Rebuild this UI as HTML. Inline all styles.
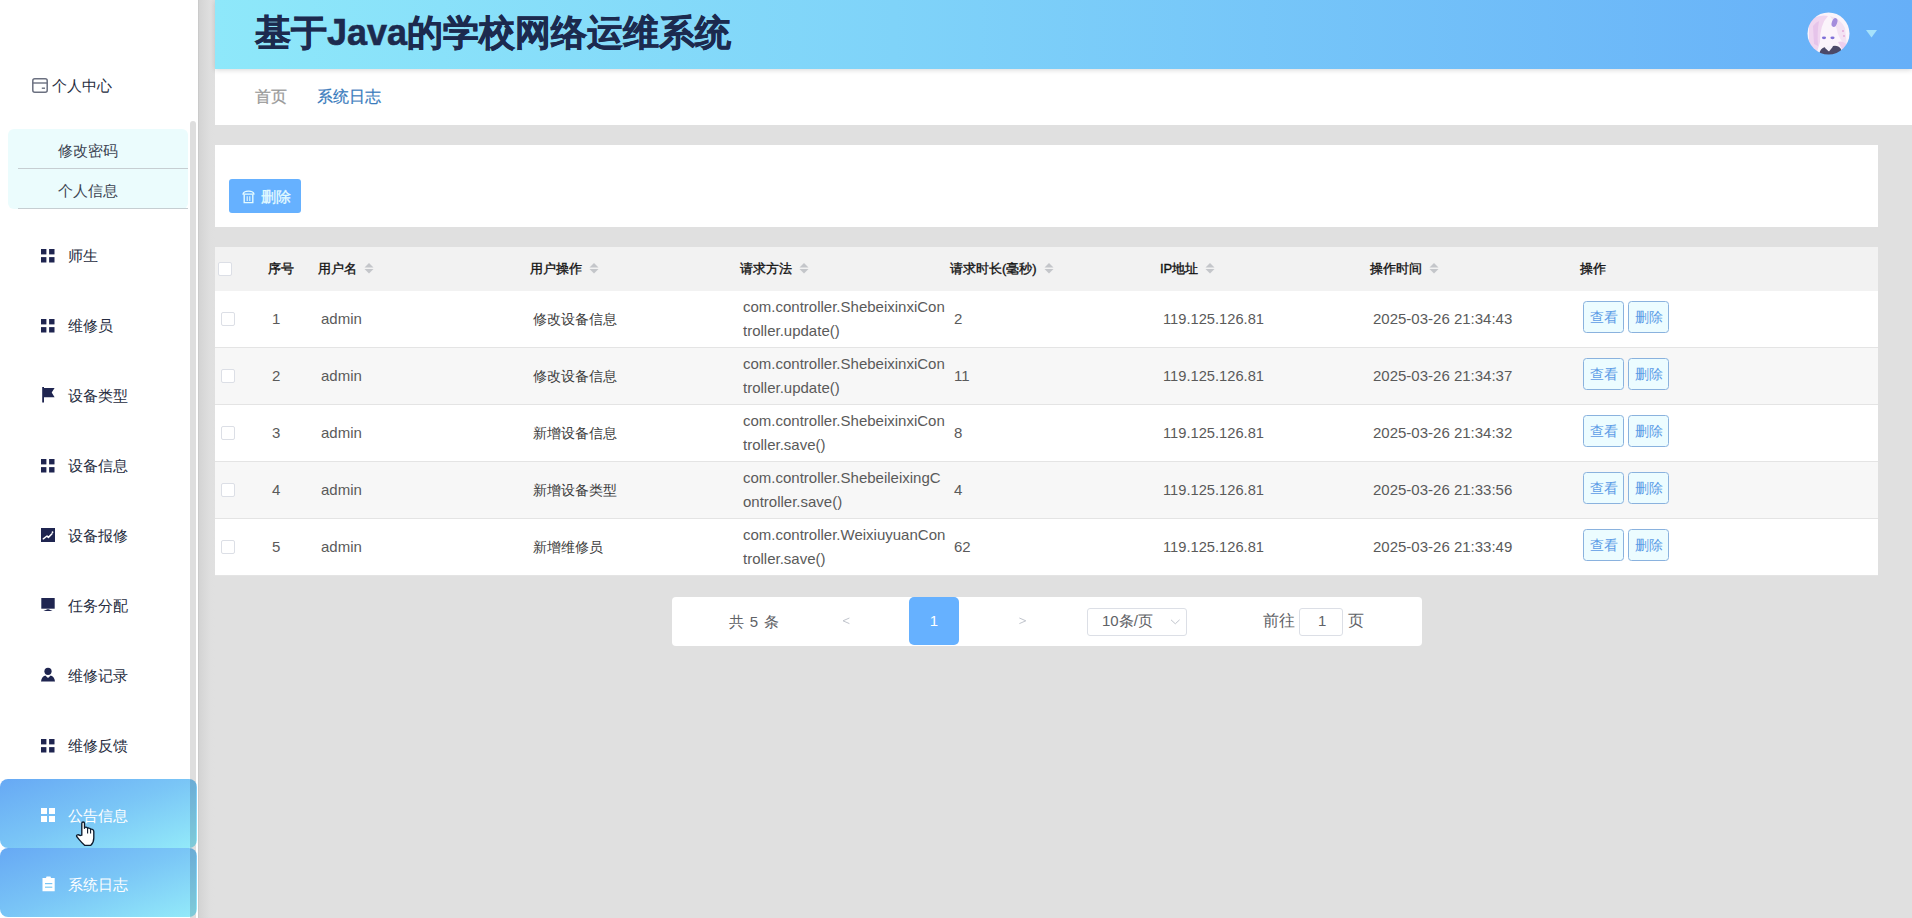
<!DOCTYPE html>
<html><head><meta charset="utf-8"><style>
*{margin:0;padding:0;box-sizing:border-box}
html,body{width:1912px;height:918px;overflow:hidden}
body{background:#e0e0e0;font-family:"Liberation Sans",sans-serif;position:relative;color:#333}
.a{position:absolute;white-space:nowrap}
#side{position:absolute;left:0;top:0;width:198px;height:918px;background:#fff}
#shadow{position:absolute;left:198px;top:0;width:17px;height:918px;background:linear-gradient(to right,#c6c6c6 0,#d4d4d4 1.5px,#d9d9d9 6px,#dfdfdf 12px,#e0e0e0 17px)}
#thumb{position:absolute;left:190px;top:121px;width:6px;height:797px;background:rgba(0,0,0,.13);border-radius:3px 3px 0 0;z-index:1}
.mi{font-size:15px;color:#262c40;line-height:20px;left:68px}
.mi.w{color:#fff}
#sub{position:absolute;left:8px;top:129px;width:180px;height:80px;background:#ebfcfd;border-radius:6px}
.si{position:absolute;left:10px;width:170px;height:40px;border-bottom:1px solid #c6ced2;font-size:15px;line-height:43px;color:#3c4452;padding-left:40px}
.act{position:absolute;left:0;width:197px;height:69px;border-radius:8px;background:linear-gradient(160deg,#62a6f4 0%,#76c4f6 50%,#90eaf9 100%);opacity:.97}
#header{position:absolute;left:215px;top:0;width:1697px;height:69px;background:linear-gradient(90deg,#8ee8fa 0%,#7fd3f9 40%,#66aff8 100%);box-shadow:0 1px 5px rgba(0,0,0,.16);z-index:2}
#title{left:40px;top:8px;font-size:36px;line-height:50px;font-weight:bold;color:#1c2a4e;-webkit-text-stroke:0.6px #1c2a4e}
#crumb{position:absolute;left:215px;top:69px;width:1697px;height:56px;background:#fff}
#card{position:absolute;left:215px;top:145px;width:1663px;height:82px;background:#fff}
#delbtn{position:absolute;left:14px;top:34px;width:72px;height:34px;background:#66b1ff;border-radius:3px}
#table{position:absolute;left:215px;top:247px;width:1663px;height:329px;background:#fff}
.th{position:absolute;left:0;top:0;height:44px;width:1663px;background:#f2f2f2}
.hd{top:12px;font-size:13px;line-height:20px;color:#111;-webkit-text-stroke:0.35px #111}
.row{position:absolute;left:0;width:1663px;height:57px;border-bottom:1px solid #e4e4e4}
.cb{position:absolute;width:14px;height:14px;background:#fff;border:1px solid #dcdfe6;border-radius:2px}
.td{top:18px;font-size:15px;line-height:20px;color:#5a5a5a}
.td2{top:4px;font-size:15px;line-height:24px;color:#5a5a5a}
.ob{position:absolute;top:10px;width:41px;height:32px;border:1px solid #8ab2de;border-radius:3.5px;background:#ecfcff;color:#5b9be6;font-size:14px;line-height:30px;text-align:center}
#pag{position:absolute;left:672px;top:597px;width:750px;height:49px;background:#fff;border-radius:4px}
.pt{top:14px;font-size:15px;line-height:20px;color:#606266}
#pg1{position:absolute;left:237px;top:0;width:50px;height:48px;background:#66b1ff;border-radius:5px;color:#fff;font-size:15px;line-height:48px;text-align:center}
#sel{position:absolute;left:415px;top:11px;width:100px;height:28px;border:1px solid #dcdfe6;border-radius:3px}
#inp{position:absolute;left:627px;top:11px;width:44px;height:28px;border:1px solid #dcdfe6;border-radius:3px}

.cj{font-size:14px;color:#3c3c3c}

</style></head><body>
<div id="side"></div><div id="thumb"></div><div id="shadow"></div>
<svg class="a" style="left:32px;top:78px" width="16" height="15" viewBox="0 0 16 15"><rect x="0.8" y="0.8" width="14.4" height="13.4" rx="2" fill="none" stroke="#6b7080" stroke-width="1.5"/><line x1="0.8" y1="5" x2="15.2" y2="5" stroke="#6b7080" stroke-width="1.4"/><line x1="9.8" y1="10.2" x2="13" y2="10.2" stroke="#6b7080" stroke-width="1.4"/></svg>
<div class="a mi" style="left:52px;top:76px">个人中心</div>
<div id="sub"><div class="si" style="top:0">修改密码</div><div class="si" style="top:40px">个人信息</div></div>
<div class="act" style="top:779px"></div>
<div class="act" style="top:848px"></div>
<svg class="a" style="left:41.3px;top:248.5px" width="15" height="15" viewBox="0 0 15 15"><rect x="0" y="0" width="5.4" height="5.4" fill="#1f2550"/><rect x="8.1" y="0" width="5.4" height="5.4" fill="#1f2550"/><rect x="0" y="8.1" width="5.4" height="5.4" fill="#1f2550"/><rect x="8.1" y="8.1" width="5.4" height="5.4" fill="#1f2550"/></svg>
<div class="a mi" style="top:246px">师生</div>
<svg class="a" style="left:41.3px;top:318.5px" width="15" height="15" viewBox="0 0 15 15"><rect x="0" y="0" width="5.4" height="5.4" fill="#1f2550"/><rect x="8.1" y="0" width="5.4" height="5.4" fill="#1f2550"/><rect x="0" y="8.1" width="5.4" height="5.4" fill="#1f2550"/><rect x="8.1" y="8.1" width="5.4" height="5.4" fill="#1f2550"/></svg>
<div class="a mi" style="top:316px">维修员</div>
<svg class="a" style="left:41px;top:387px" width="15" height="16" viewBox="0 0 15 16"><rect x="1.2" y="0" width="1.8" height="15.5" fill="#1f2550"/><path d="M3 1 L13.6 1 L10.7 5.6 L13.6 10.3 L3 10.3 Z" fill="#1f2550"/></svg>
<div class="a mi" style="top:386px">设备类型</div>
<svg class="a" style="left:41.3px;top:458.5px" width="15" height="15" viewBox="0 0 15 15"><rect x="0" y="0" width="5.4" height="5.4" fill="#1f2550"/><rect x="8.1" y="0" width="5.4" height="5.4" fill="#1f2550"/><rect x="0" y="8.1" width="5.4" height="5.4" fill="#1f2550"/><rect x="8.1" y="8.1" width="5.4" height="5.4" fill="#1f2550"/></svg>
<div class="a mi" style="top:456px">设备信息</div>
<svg class="a" style="left:41px;top:528px" width="14" height="14" viewBox="0 0 14 14"><rect x="0" y="0" width="14" height="14" fill="#1f2550"/><path d="M2.3 10.8 L6 8 L7.4 9.4 L11 5.8" stroke="#fff" stroke-width="1.5" fill="none" stroke-linecap="round" stroke-linejoin="round"/><circle cx="11.5" cy="4.2" r="0.9" fill="#fff"/></svg>
<div class="a mi" style="top:526px">设备报修</div>
<svg class="a" style="left:41px;top:598px" width="14" height="14" viewBox="0 0 14 14"><rect x="0.3" y="0" width="13.4" height="10.7" fill="#1f2550"/><path d="M2.4 12.6 Q5.5 12 6.2 11.2 L7.8 11.2 Q8.5 12 11.6 12.6 Q7 13.6 2.4 12.6 Z" fill="#1f2550"/></svg>
<div class="a mi" style="top:596px">任务分配</div>
<svg class="a" style="left:41px;top:667px" width="14" height="15" viewBox="0 0 14 15"><circle cx="7" cy="4.3" r="3.6" fill="#1f2550"/><path d="M0 14.5 Q0.6 9.5 4.3 8.6 L7 11 L9.7 8.6 Q13.4 9.5 14 14.5 Z" fill="#1f2550"/></svg>
<div class="a mi" style="top:666px">维修记录</div>
<svg class="a" style="left:41.3px;top:738.5px" width="15" height="15" viewBox="0 0 15 15"><rect x="0" y="0" width="5.4" height="5.4" fill="#1f2550"/><rect x="8.1" y="0" width="5.4" height="5.4" fill="#1f2550"/><rect x="0" y="8.1" width="5.4" height="5.4" fill="#1f2550"/><rect x="8.1" y="8.1" width="5.4" height="5.4" fill="#1f2550"/></svg>
<div class="a mi" style="top:736px">维修反馈</div>
<svg class="a" style="left:41px;top:807.5px" width="15" height="15" viewBox="0 0 15 15"><rect x="0" y="0" width="6" height="6" fill="#fff"/><rect x="8" y="0" width="6" height="6" fill="#fff"/><rect x="0" y="8" width="6" height="6" fill="#fff"/><rect x="8" y="8" width="6" height="6" fill="#fff"/></svg>
<div class="a mi w" style="top:806px">公告信息</div>
<svg class="a" style="left:42px;top:876px" width="14" height="16" viewBox="0 0 14 16"><path d="M0.5 2 L4 2 L4.5 0.6 L8.5 0.6 L9 2 L12.7 2 L12.7 15.2 L0.5 15.2 Z" fill="#fff"/><rect x="3" y="7" width="7.3" height="1.2" fill="#79c5f5"/><rect x="3" y="10.6" width="7.3" height="1.2" fill="#7ccaf5"/></svg>
<div class="a mi w" style="top:875px">系统日志</div>
<svg class="a" style="left:75px;top:821px" width="21" height="27" viewBox="0 0 21 27"><path d="M6.8 14.2 L6.8 2.5 Q6.8 1 8.15 1 Q9.5 1 9.5 2.5 L9.5 7.2 Q9.7 6 11 6.1 Q12.4 6.2 12.6 7.4 Q13 6.9 14.1 7.1 Q15.4 7.3 15.6 8.4 Q16.2 8 17.3 8.3 Q18.8 8.8 18.8 10.6 L18.8 17 Q18.8 21.6 15.8 24.3 L9.6 24.3 Q7.2 22.2 4.2 18.6 L1.9 15.8 Q1.1 14.6 2.1 14 Q3.5 13.3 5 14.6 Z" fill="#fff" stroke="#0f1c2e" stroke-width="1.35" stroke-linejoin="round"/><path d="M12.6 7.6 L12.6 12.6 M15.6 8.6 L15.6 12.6" stroke="#0f1c2e" stroke-width="1.1"/></svg>
<div id="header"><div class="a" id="title">基于Java的学校网络运维系统</div>
<svg class="a" style="left:1592px;top:12px" width="43" height="43" viewBox="0 0 43 43"><defs><clipPath id="cc"><circle cx="21.5" cy="21.5" r="21"/></clipPath><filter id="bl" x="-5%" y="-5%" width="110%" height="110%"><feGaussianBlur stdDeviation="0.5"/></filter></defs><g clip-path="url(#cc)"><g filter="url(#bl)"><rect width="43" height="43" fill="#fbf4fb"/><path d="M2 10 Q10 2 21 4 Q13 12 13 30 L10 40 L2 36Z" fill="#f0d6f0"/><path d="M6 14 Q9 10 12 9 Q10 20 11 34 L7 32Z" fill="#e6c4ea"/><path d="M23 4 Q33 6 38 16 L40 34 Q34 30 31 22 Q29 12 23 4Z" fill="#f3e2f3"/><ellipse cx="27.5" cy="10.5" rx="2.6" ry="4.6" transform="rotate(20 27.5 10.5)" fill="#a48ddc"/><ellipse cx="17" cy="25.8" rx="2.1" ry="1.4" fill="#7f70d8"/><ellipse cx="25.5" cy="25.8" rx="2.1" ry="1.4" fill="#7f70d8"/><path d="M12 43 Q13 36 18 35 L21.5 39 L26 34 Q31 33 34 37 L35 43Z" fill="#4c4868"/><path d="M17.5 35.5 Q21.5 33 26 34.5 L22 39.5Z" fill="#f6f2fa"/><circle cx="36" cy="19" r="1" fill="#e4a8d8"/><circle cx="37" cy="24" r="0.9" fill="#e4a8d8"/><path d="M31 30 Q36 28 40 33 L38 41 Q34 36 31 30Z" fill="#edcfee"/></g></g></svg>
<svg class="a" style="left:1651px;top:30px" width="11" height="8" viewBox="0 0 11 8"><path d="M0 0 L11 0 L5.5 7.5 Z" fill="#a6e2fb"/></svg>
</div>
<div id="crumb"><div class="a" style="left:40px;top:18px;font-size:16px;line-height:20px;color:#999;-webkit-text-stroke:0.25px #999">首页</div><div class="a" style="left:102px;top:18px;font-size:16px;line-height:20px;color:#3a7cbd;-webkit-text-stroke:0.2px #3a7cbd">系统日志</div></div>
<div id="card"><div id="delbtn"><svg class="a" style="left:13px;top:11px" width="13" height="14" viewBox="0 0 13 14"><path d="M1 4.2 Q1.5 1.2 6.5 1.2 Q11.5 1.2 12 4.2 Z" fill="none" stroke="#e4fbff" stroke-width="1.3" stroke-linejoin="round"/><path d="M2.2 4.4 L2.2 12.6 L10.8 12.6 L10.8 4.4" fill="none" stroke="#e4fbff" stroke-width="1.4"/><line x1="5.2" y1="6.2" x2="5.2" y2="11" stroke="#e4fbff" stroke-width="1.1"/><line x1="7.8" y1="6.2" x2="7.8" y2="11" stroke="#e4fbff" stroke-width="1.1"/></svg><div class="a" style="left:32px;top:8px;font-size:15px;line-height:20px;color:#e6fdff;-webkit-text-stroke:0.3px #e6fdff">删除</div></div></div>
<div id="table"><div class="th"></div>
<div class="cb" style="left:3px;top:15px"></div>
<div class="a hd" style="left:53px">序号</div>
<div class="a hd" style="left:103px">用户名</div>
<svg class="a" style="left:149px;top:16px" width="10" height="11" viewBox="0 0 10 11"><path d="M5 0 L9.5 4.5 L0.5 4.5 Z" fill="#c4c6ca"/><path d="M0.5 6 L9.5 6 L5 10.5 Z" fill="#c4c6ca"/></svg>
<div class="a hd" style="left:315px">用户操作</div>
<svg class="a" style="left:374px;top:16px" width="10" height="11" viewBox="0 0 10 11"><path d="M5 0 L9.5 4.5 L0.5 4.5 Z" fill="#c4c6ca"/><path d="M0.5 6 L9.5 6 L5 10.5 Z" fill="#c4c6ca"/></svg>
<div class="a hd" style="left:525px">请求方法</div>
<svg class="a" style="left:584px;top:16px" width="10" height="11" viewBox="0 0 10 11"><path d="M5 0 L9.5 4.5 L0.5 4.5 Z" fill="#c4c6ca"/><path d="M0.5 6 L9.5 6 L5 10.5 Z" fill="#c4c6ca"/></svg>
<div class="a hd" style="left:735px">请求时长(毫秒)</div>
<svg class="a" style="left:829px;top:16px" width="10" height="11" viewBox="0 0 10 11"><path d="M5 0 L9.5 4.5 L0.5 4.5 Z" fill="#c4c6ca"/><path d="M0.5 6 L9.5 6 L5 10.5 Z" fill="#c4c6ca"/></svg>
<div class="a hd" style="left:945px">IP地址</div>
<svg class="a" style="left:990px;top:16px" width="10" height="11" viewBox="0 0 10 11"><path d="M5 0 L9.5 4.5 L0.5 4.5 Z" fill="#c4c6ca"/><path d="M0.5 6 L9.5 6 L5 10.5 Z" fill="#c4c6ca"/></svg>
<div class="a hd" style="left:1155px">操作时间</div>
<svg class="a" style="left:1214px;top:16px" width="10" height="11" viewBox="0 0 10 11"><path d="M5 0 L9.5 4.5 L0.5 4.5 Z" fill="#c4c6ca"/><path d="M0.5 6 L9.5 6 L5 10.5 Z" fill="#c4c6ca"/></svg>
<div class="a hd" style="left:1365px">操作</div>
<div class="row" style="top:44px;background:#fff">
<div class="cb" style="left:6px;top:21px"></div>
<div class="a td" style="left:57px">1</div>
<div class="a td" style="left:106px">admin</div>
<div class="a td cj" style="left:318px">修改设备信息</div>
<div class="a td2" style="left:528px">com.controller.ShebeixinxiCon<br>troller.update()</div>
<div class="a td" style="left:739px">2</div>
<div class="a td" style="left:948px;font-size:14.7px">119.125.126.81</div>
<div class="a td" style="left:1158px">2025-03-26 21:34:43</div>
<div class="ob" style="left:1368px">查看</div><div class="ob" style="left:1413px">删除</div>
</div>
<div class="row" style="top:101px;background:#f7f7f7">
<div class="cb" style="left:6px;top:21px"></div>
<div class="a td" style="left:57px">2</div>
<div class="a td" style="left:106px">admin</div>
<div class="a td cj" style="left:318px">修改设备信息</div>
<div class="a td2" style="left:528px">com.controller.ShebeixinxiCon<br>troller.update()</div>
<div class="a td" style="left:739px">11</div>
<div class="a td" style="left:948px;font-size:14.7px">119.125.126.81</div>
<div class="a td" style="left:1158px">2025-03-26 21:34:37</div>
<div class="ob" style="left:1368px">查看</div><div class="ob" style="left:1413px">删除</div>
</div>
<div class="row" style="top:158px;background:#fff">
<div class="cb" style="left:6px;top:21px"></div>
<div class="a td" style="left:57px">3</div>
<div class="a td" style="left:106px">admin</div>
<div class="a td cj" style="left:318px">新增设备信息</div>
<div class="a td2" style="left:528px">com.controller.ShebeixinxiCon<br>troller.save()</div>
<div class="a td" style="left:739px">8</div>
<div class="a td" style="left:948px;font-size:14.7px">119.125.126.81</div>
<div class="a td" style="left:1158px">2025-03-26 21:34:32</div>
<div class="ob" style="left:1368px">查看</div><div class="ob" style="left:1413px">删除</div>
</div>
<div class="row" style="top:215px;background:#f7f7f7">
<div class="cb" style="left:6px;top:21px"></div>
<div class="a td" style="left:57px">4</div>
<div class="a td" style="left:106px">admin</div>
<div class="a td cj" style="left:318px">新增设备类型</div>
<div class="a td2" style="left:528px">com.controller.ShebeileixingC<br>ontroller.save()</div>
<div class="a td" style="left:739px">4</div>
<div class="a td" style="left:948px;font-size:14.7px">119.125.126.81</div>
<div class="a td" style="left:1158px">2025-03-26 21:33:56</div>
<div class="ob" style="left:1368px">查看</div><div class="ob" style="left:1413px">删除</div>
</div>
<div class="row" style="top:272px;background:#fff">
<div class="cb" style="left:6px;top:21px"></div>
<div class="a td" style="left:57px">5</div>
<div class="a td" style="left:106px">admin</div>
<div class="a td cj" style="left:318px">新增维修员</div>
<div class="a td2" style="left:528px">com.controller.WeixiuyuanCon<br>troller.save()</div>
<div class="a td" style="left:739px">62</div>
<div class="a td" style="left:948px;font-size:14.7px">119.125.126.81</div>
<div class="a td" style="left:1158px">2025-03-26 21:33:49</div>
<div class="ob" style="left:1368px">查看</div><div class="ob" style="left:1413px">删除</div>
</div>
</div>
<div id="pag"><div class="a pt" style="left:57px;top:15px;word-spacing:1.5px">共 5 条</div>
<svg class="a" style="left:170px;top:20px" width="9" height="8" viewBox="0 0 9 8"><path d="M7.4 1 L1 3.8 L7.4 6.6" fill="none" stroke="#c0c4cc" stroke-width="1"/></svg>
<div id="pg1">1</div>
<svg class="a" style="left:346px;top:20px" width="9" height="8" viewBox="0 0 9 8"><path d="M1.4 1 L7.8 3.8 L1.4 6.6" fill="none" stroke="#c0c4cc" stroke-width="1"/></svg>
<div id="sel"><div class="a pt" style="left:14px;top:2px">10条/页</div><svg class="a" style="left:82px;top:10px" width="11" height="6" viewBox="0 0 11 6"><path d="M1 0.8 L5.3 4.8 L9.6 0.8" fill="none" stroke="#c0c4cc" stroke-width="1"/></svg></div>
<div class="a pt" style="left:591px;font-size:16px">前往</div><div id="inp"><div class="a pt" style="left:18px;top:1.5px">1</div></div><div class="a pt" style="left:676px;font-size:16px">页</div>
</div>
</body></html>
